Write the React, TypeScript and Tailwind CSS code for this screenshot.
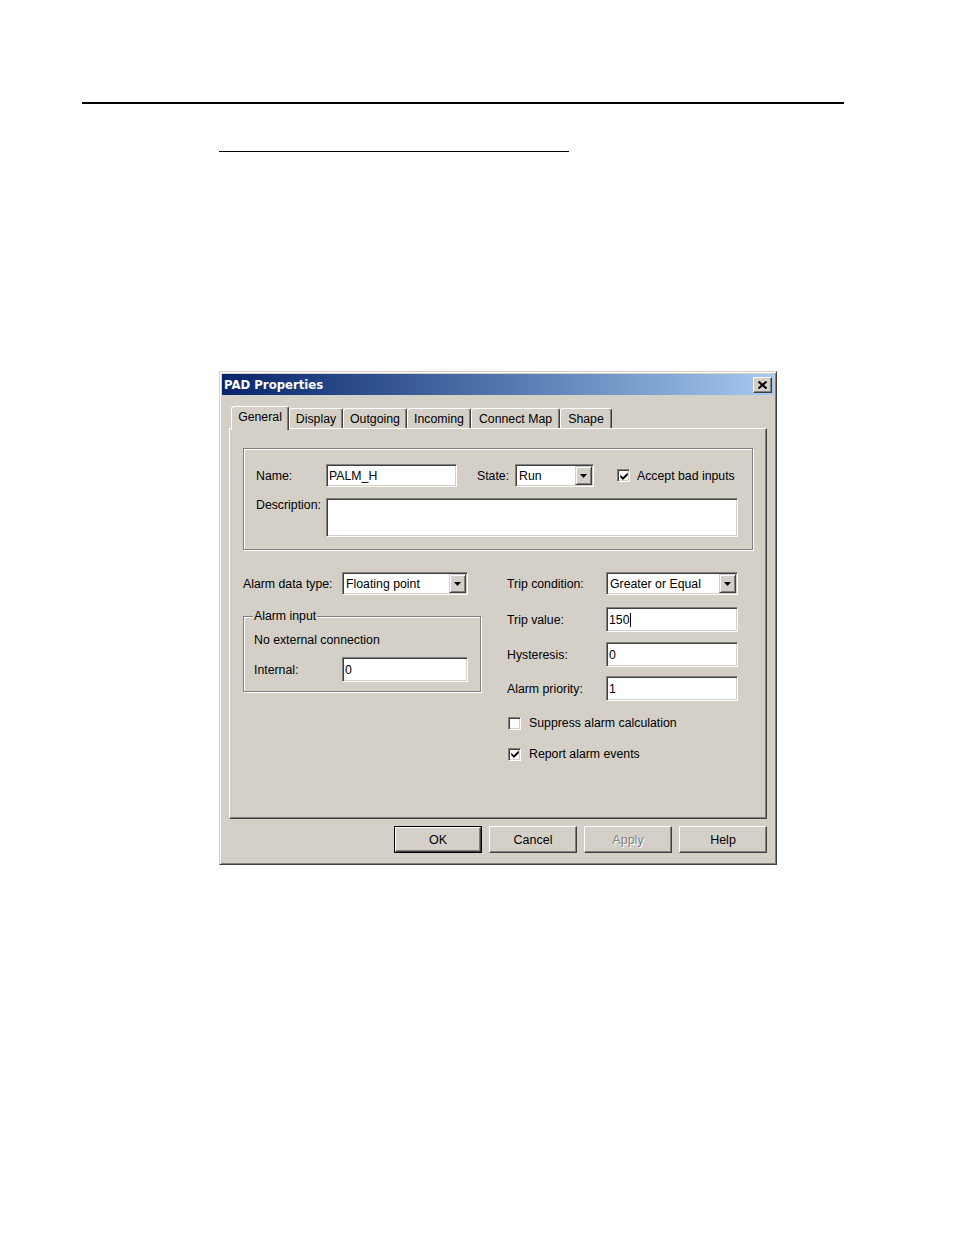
import React from "react";

const sunken =
  "bg-white border border-t-[#808080] border-l-[#808080] border-b-white border-r-white shadow-[inset_1px_1px_0_#404040,inset_-1px_-1px_0_#d4d0c8] p-[1px]";
const raised =
  "bg-[#d4d0c8] border border-t-white border-l-white border-b-[#404040] border-r-[#404040] shadow-[inset_-1px_-1px_0_#808080]";
const etched = "border border-[#808080] shadow-[inset_1px_1px_0_#fff,1px_1px_0_#fff]";

function TextBox({ w, h, children }: { w: string; h: string; children?: React.ReactNode }) {
  return (
    <div className={`${sunken} ${w} ${h} flex items-center pl-[2px] leading-[14px]`}>
      {children}
    </div>
  );
}

function DropArrow() {
  return (
    <div className="w-[17px] h-full bg-[#d4d0c8] border border-t-[#d4d0c8] border-l-[#d4d0c8] border-b-[#404040] border-r-[#404040] shadow-[inset_1px_1px_0_#fff,inset_-1px_-1px_0_#808080] flex items-center justify-center">
      <svg width="7" height="4" viewBox="0 0 7 4">
        <path d="M0 0H7L3.5 4Z" fill="#000" />
      </svg>
    </div>
  );
}

function Select({ w, value }: { w: string; value: string }) {
  return (
    <div className={`${sunken} ${w} h-[23px] flex items-stretch justify-between`}>
      <span className="pl-[2px] flex items-center leading-[14px]">{value}</span>
      <DropArrow />
    </div>
  );
}

function Check({ checked }: { checked?: boolean }) {
  return (
    <div className="w-[13px] h-[13px] bg-white border border-t-[#808080] border-l-[#808080] border-b-white border-r-white shadow-[inset_1px_1px_0_#404040,inset_-1px_-1px_0_#d4d0c8] flex items-center justify-center shrink-0">
      {checked && (
        <svg width="8" height="8" viewBox="0 0 7 7.5">
          <path d="M0 2.5L2.5 5L7 0.5V3L2.5 7.5L0 5Z" fill="#000" />
        </svg>
      )}
    </div>
  );
}

function Tab({ label, w, selected }: { label: string; w: string; selected?: boolean }) {
  if (selected) {
    return (
      <div
        className={`${w} h-[24px] -mb-[2px] relative z-10 bg-[#d4d0c8] border-t border-l border-t-white border-l-white border-r border-r-[#404040] shadow-[inset_-1px_0_0_#808080] rounded-tl-[3px] rounded-tr-[3px] flex items-center justify-center pb-[3px]`}
      >
        {label}
      </div>
    );
  }
  return (
    <div
      className={`${w} h-[20px] bg-[#d4d0c8] border-t border-l border-t-white border-l-white border-r border-r-[#404040] shadow-[inset_-1px_0_0_#808080] rounded-tl-[3px] rounded-tr-[3px] flex items-center justify-center`}
    >
      {label}
    </div>
  );
}

function Button({ label, isDefault, disabled }: { label: string; isDefault?: boolean; disabled?: boolean }) {
  const inner = (
    <div
      className={`${raised} w-full h-full flex items-center justify-center text-[12.5px] ${
        disabled ? "text-[#808080] [text-shadow:1px_1px_0_#fff]" : "text-black"
      }`}
    >
      {label}
    </div>
  );
  if (isDefault) {
    return <div className="w-[88px] h-[27px] border border-black">{inner}</div>;
  }
  return <div className="w-[88px] h-[27px]">{inner}</div>;
}

export default function App() {
  return (
    <div className="w-[954px] h-[1235px] bg-white font-['Liberation_Sans',Arial,sans-serif] text-[12.3px] text-black leading-[14px] overflow-hidden">
      <div className="pt-[102px] pl-[82px]">
        <div className="w-[762px] h-[2px] bg-black" />
      </div>
      <div className="mt-[47px] ml-[219px] w-[350px] h-px bg-black" />

      {/* Dialog */}
      <div className="mt-[219px] ml-[219px] w-[558px] h-[494px] bg-[#d4d0c8] border border-t-[#d4d0c8] border-l-[#d4d0c8] border-b-[#404040] border-r-[#404040] shadow-[inset_1px_1px_0_#fff,inset_-1px_-1px_0_#808080] p-[2px]">
        {/* Title bar */}
        <div className="h-[21px] bg-linear-to-r from-[#0a246a] to-[#a6caf0] flex items-center justify-between pl-[2px] pr-[2px]">
          <span className="font-['DejaVu_Sans',sans-serif] font-bold text-[11.7px] text-white leading-[14px]">
            PAD Properties
          </span>
          <div className={`${raised} w-[19px] h-[16px] flex items-center justify-center`}>
            <svg width="9" height="8" viewBox="0 0 9 8">
              <path d="M0.5 0.5L8.5 7.5M8.5 0.5L0.5 7.5" stroke="#000" strokeWidth="2" />
            </svg>
          </div>
        </div>

        <div className="px-[7px]">
          {/* Tabs */}
          <div className="mt-[11px] h-[22px] flex items-end pl-[2px]">
            <Tab label="General" w="w-[58px]" selected />
            <Tab label="Display" w="w-[54px]" />
            <Tab label="Outgoing" w="w-[64px]" />
            <Tab label="Incoming" w="w-[64px]" />
            <Tab label="Connect Map" w="w-[89px]" />
            <Tab label="Shape" w="w-[52px]" />
          </div>

          {/* Panel */}
          <div className="w-[538px] h-[391px] border border-t-white border-l-white border-b-[#404040] border-r-[#404040] shadow-[inset_-1px_-1px_0_#808080] pt-[19px] pl-[13px]">
            {/* top group */}
            <div className={`${etched} w-[510px] h-[102px] pt-[15px] pl-[12px]`}>
              <div className="flex items-center h-[23px]">
                <span className="w-[70px]">Name:</span>
                <TextBox w="w-[131px]" h="h-[23px]">PALM_H</TextBox>
                <span className="ml-[20px] w-[38px]">State:</span>
                <Select w="w-[79px]" value="Run" />
                <div className="ml-[23px]">
                  <Check checked />
                </div>
                <span className="ml-[7px]">Accept bad inputs</span>
              </div>
              <div className="flex items-start mt-[11px]">
                <span className="w-[70px]">Description:</span>
                <TextBox w="w-[412px]" h="h-[39px]" />
              </div>
            </div>

            {/* lower area */}
            <div className="mt-[22px] flex">
              {/* left */}
              <div className="w-[238px]">
                <div className="flex items-center h-[23px]">
                  <span className="w-[99px]">Alarm data type:</span>
                  <Select w="w-[126px]" value="Floating point" />
                </div>
                <div className={`${etched} relative mt-[21px] w-[238px] h-[76px] pt-[16px] pl-[10px]`}>
                  <span className="absolute -top-[8px] left-[9px] px-[1px] bg-[#d4d0c8]">Alarm input</span>
                  <div>No external connection</div>
                  <div className="flex items-center mt-[10px]">
                    <span className="w-[88px]">Internal:</span>
                    <TextBox w="w-[126px]" h="h-[25px]">0</TextBox>
                  </div>
                </div>
              </div>

              {/* right */}
              <div className="ml-[26px]">
                <div className="flex items-center h-[23px]">
                  <span className="w-[99px]">Trip condition:</span>
                  <Select w="w-[132px]" value="Greater or Equal" />
                </div>
                <div className="flex items-center mt-[12px]">
                  <span className="w-[99px]">Trip value:</span>
                  <TextBox w="w-[132px]" h="h-[25px]">
                    150<span className="w-px h-[14px] bg-black" />
                  </TextBox>
                </div>
                <div className="flex items-center mt-[10px]">
                  <span className="w-[99px]">Hysteresis:</span>
                  <TextBox w="w-[132px]" h="h-[25px]">0</TextBox>
                </div>
                <div className="flex items-center mt-[9px]">
                  <span className="w-[99px]">Alarm priority:</span>
                  <TextBox w="w-[132px]" h="h-[25px]">1</TextBox>
                </div>
                <div className="flex items-center mt-[15px] ml-[1px]">
                  <Check />
                  <span className="ml-[8px]">Suppress alarm calculation</span>
                </div>
                <div className="flex items-center mt-[17px] ml-[1px]">
                  <Check checked />
                  <span className="ml-[8px]">Report alarm events</span>
                </div>
              </div>
            </div>
          </div>

          {/* Buttons */}
          <div className="w-[538px] mt-[7px] flex justify-end gap-[7px]">
            <Button label="OK" isDefault />
            <Button label="Cancel" />
            <Button label="Apply" disabled />
            <Button label="Help" />
          </div>
        </div>
      </div>
    </div>
  );
}
